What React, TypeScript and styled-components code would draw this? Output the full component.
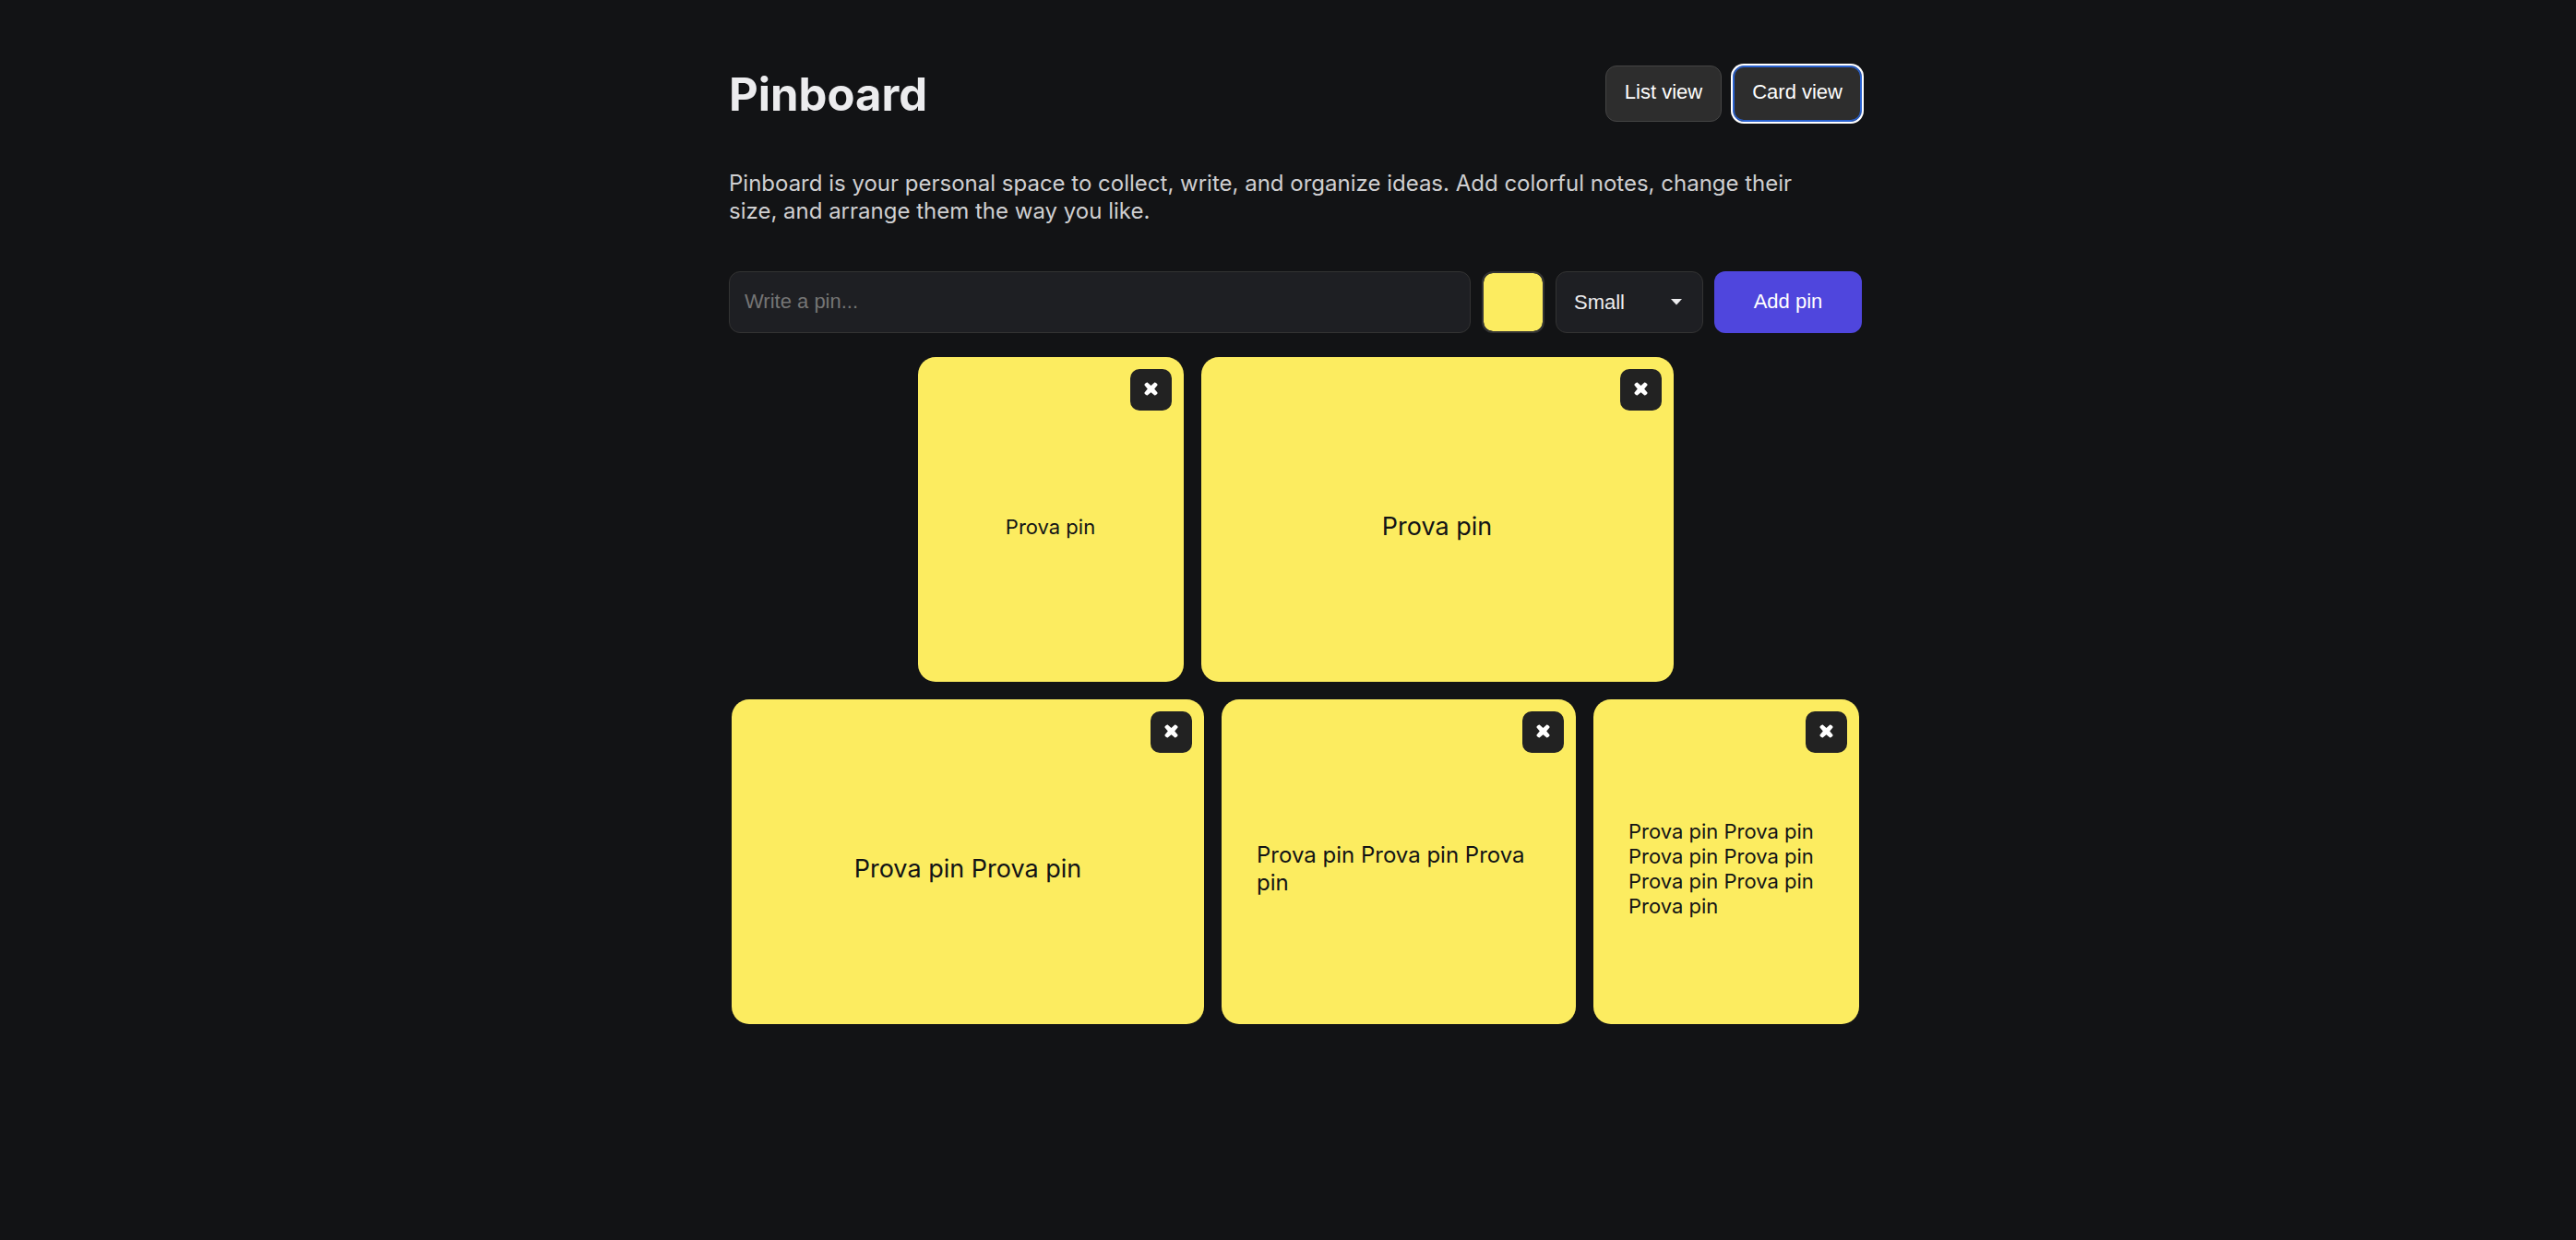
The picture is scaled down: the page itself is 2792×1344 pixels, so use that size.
import React, { useState } from "react";
import styled, { createGlobalStyle, css } from "styled-components";

type Size = "small" | "medium" | "large";
type View = "list" | "card";

interface Pin {
  id: number;
  text: string;
  size: Size;
  color: string;
}

const YELLOW = "#fcec60";

const cardWidth: Record<Size, number> = { small: 288, medium: 384, large: 512 };
const fontSize: Record<Size, number> = { small: 22, medium: 24, large: 27 };
const lineHeight: Record<Size, number> = { small: 27, medium: 30, large: 34 };

const initialPins: Pin[] = [
  { id: 1, text: "Prova pin", size: "small", color: YELLOW },
  { id: 2, text: "Prova pin", size: "large", color: YELLOW },
  { id: 3, text: "Prova pin Prova pin", size: "large", color: YELLOW },
  { id: 4, text: "Prova pin Prova pin Prova pin", size: "medium", color: YELLOW },
  {
    id: 5,
    text: "Prova pin Prova pin Prova pin Prova pin Prova pin Prova pin Prova pin",
    size: "small",
    color: YELLOW,
  },
];

const GlobalStyle = createGlobalStyle`
  *, *::before, *::after {
    box-sizing: border-box;
  }

  body {
    margin: 0;
    background: #121315;
    color: #ececee;
    font-family: Inter, "Liberation Sans", sans-serif;
  }
`;

const controlText = css`
  font-family: "Liberation Sans", Arial, sans-serif;
  font-size: 22px;
  line-height: 26px;
`;

const Page = styled.main`
  max-width: 1244px;
  margin: 0 auto;
  padding: 71px 0 80px 16px;
`;

const Header = styled.header`
  display: flex;
  align-items: flex-start;
  justify-content: space-between;
  gap: 12px;
`;

const Title = styled.h1`
  margin: 0;
  font-size: 49px;
  line-height: 64px;
  font-weight: 700;
`;

const ViewSwitch = styled.div`
  display: flex;
  gap: 12px;
`;

const ViewButton = styled.button<{ $active: boolean }>`
  ${controlText}
  height: 61px;
  padding: 0 20px 4px;
  border: 1px solid #444;
  border-radius: 12px;
  background: #2d2d2d;
  color: #fff;
  cursor: pointer;
  ${({ $active }) =>
    $active &&
    css`
      border-color: #2a62d0;
      box-shadow: inset 0 0 0 1px #2a62d0, 0 0 0 2px #fff;
    `}
`;

const Intro = styled.p`
  margin: 49px 0 50px;
  padding-right: 40px;
  color: #cfcfd1;
  font-size: 24px;
  line-height: 30px;
`;

const PinForm = styled.form`
  display: grid;
  grid-template-columns: 1fr 68px 160px 160px;
  gap: 12px;
  height: 67px;
`;

const field = css`
  width: 100%;
  height: 100%;
  border: 1px solid #333;
  border-radius: 12px;
  background: #1e1f23;
`;

const TextField = styled.input`
  ${controlText}
  ${field}
  padding: 0 16px 2px;
  color: #ececee;

  &::placeholder {
    color: #757575;
    opacity: 1;
  }
`;

const ColorField = styled.input`
  ${field}
  padding: 0;
  border-width: 2px;
  overflow: hidden;
  cursor: pointer;

  &::-webkit-color-swatch-wrapper {
    padding: 0;
  }

  &::-webkit-color-swatch {
    border: none;
    border-radius: 10px;
  }
`;

const SelectBox = styled.div`
  position: relative;
`;

const SizeSelect = styled.select`
  ${controlText}
  ${field}
  appearance: none;
  padding: 0 19px;
  color: #ececee;
  cursor: pointer;
`;

const Caret = styled.svg`
  position: absolute;
  top: 30px;
  right: 23px;
  width: 12px;
  height: 7px;
  fill: #ececee;
  pointer-events: none;
`;

const AddButton = styled.button`
  ${controlText}
  padding: 0 0 2px;
  border: none;
  border-radius: 12px;
  background: #4f46dd;
  color: #fff;
  cursor: pointer;
`;

const Board = styled.ul<{ $view: View }>`
  display: flex;
  flex-flow: ${({ $view }) => ($view === "card" ? "row wrap" : "column")};
  justify-content: center;
  gap: 19px;
  margin: 26px 0 0;
  padding: 0;
  list-style: none;
`;

const Card = styled.li<{ $size: Size; $color: string; $view: View }>`
  position: relative;
  display: flex;
  align-items: center;
  justify-content: center;
  width: ${({ $size, $view }) => ($view === "card" ? `${cardWidth[$size]}px` : "100%")};
  min-height: ${({ $view }) => ($view === "card" ? 352 : 120)}px;
  padding: 54px 38px 38px;
  border-radius: 19px;
  background: ${({ $color }) => $color};
  color: #121315;
  font-size: ${({ $size }) => fontSize[$size]}px;
  line-height: ${({ $size }) => lineHeight[$size]}px;
`;

const CardText = styled.p`
  margin: 0;
`;

const CloseButton = styled.button`
  position: absolute;
  top: 13px;
  right: 13px;
  display: grid;
  place-items: center;
  width: 45px;
  height: 45px;
  padding: 0 0 2px;
  border: none;
  border-radius: 10px;
  background: #222;
  cursor: pointer;
`;

const CloseIcon = () => (
  <svg width="15" height="15" viewBox="0 0 15 15" fill="#fff" aria-hidden="true">
    <path d="M3.600 .5 7.500 4 11.400 .5Q12.200 .2 12.900 .9L14.100 2.100Q14.800 2.800 14.500 3.600L11.200 7.500 14.500 11.400Q14.800 12.200 14.100 12.900L12.900 14.100Q12.200 14.800 11.400 14.500L7.500 11.200 3.600 14.500Q2.800 14.800 2.100 14.100L.9 12.900Q.2 12.200 .5 11.400L3.800 7.500 .5 3.600Q.2 2.800 .9 2.100L2.100 .9Q2.800 .2 3.600 .5Z" />
  </svg>
);

export default function App() {
  const [view, setView] = useState<View>("card");
  const [pins, setPins] = useState<Pin[]>(initialPins);
  const [text, setText] = useState("");
  const [color, setColor] = useState(YELLOW);
  const [size, setSize] = useState<Size>("small");

  const addPin = (event: React.FormEvent) => {
    event.preventDefault();
    if (!text.trim()) return;
    setPins([...pins, { id: Date.now(), text, size, color }]);
    setText("");
  };

  return (
    <>
      <GlobalStyle />
      <Page>
        <Header>
          <Title>Pinboard</Title>
          <ViewSwitch>
            <ViewButton type="button" $active={view === "list"} onClick={() => setView("list")}>
              List view
            </ViewButton>
            <ViewButton type="button" $active={view === "card"} onClick={() => setView("card")}>
              Card view
            </ViewButton>
          </ViewSwitch>
        </Header>
        <Intro>
          Pinboard is your personal space to collect, write, and organize ideas. Add colorful notes,
          change their size, and arrange them the way you like.
        </Intro>
        <PinForm onSubmit={addPin}>
          <TextField
            type="text"
            aria-label="Pin text"
            placeholder="Write a pin..."
            value={text}
            onChange={(e) => setText(e.target.value)}
          />
          <ColorField
            type="color"
            aria-label="Pin color"
            value={color}
            onChange={(e) => setColor(e.target.value)}
          />
          <SelectBox>
            <SizeSelect
              aria-label="Pin size"
              value={size}
              onChange={(e) => setSize(e.target.value as Size)}
            >
              <option value="small">Small</option>
              <option value="medium">Medium</option>
              <option value="large">Large</option>
            </SizeSelect>
            <Caret viewBox="0 0 12 7" aria-hidden="true">
              <path d="M0 0H12L6 6.500Z" />
            </Caret>
          </SelectBox>
          <AddButton type="submit">Add pin</AddButton>
        </PinForm>
        <Board $view={view}>
          {pins.map((pin) => (
            <Card key={pin.id} $size={pin.size} $color={pin.color} $view={view}>
              <CardText>{pin.text}</CardText>
              <CloseButton
                type="button"
                aria-label="Remove pin"
                onClick={() => setPins(pins.filter((p) => p.id !== pin.id))}
              >
                <CloseIcon />
              </CloseButton>
            </Card>
          ))}
        </Board>
      </Page>
    </>
  );
}
